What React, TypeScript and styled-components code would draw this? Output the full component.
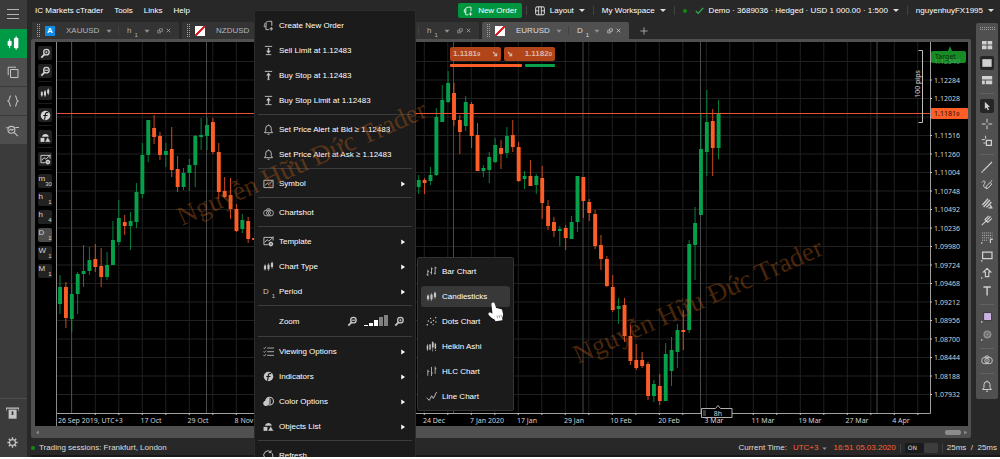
import React from 'react';
import styled, { createGlobalStyle, css } from 'styled-components';

const GlobalStyle = createGlobalStyle`
  * { box-sizing: border-box; }
  body { margin: 0; background: #fff; font-family: "Liberation Sans", Arial, sans-serif; font-size: 8px; line-height: 10px; color: #fff; }
  button { font: inherit; color: inherit; background: none; border: 0; padding: 0; margin: 0; text-align: left; }
  ul { list-style: none; margin: 0; padding: 0; }
  svg { display: block; flex: none; }
`;

/* ---------- icons, all on a 12 by 12 grid ---------- */

const S = { fill: 'none', stroke: 'currentColor' } as const;

const ICONS: Record<string, React.ReactNode> = {
  candles: (
    <g fill="currentColor">
      <rect x="1" y="5" width="2.4" height="4" /><rect x="1.9" y="3.6" width=".7" height="7" />
      <rect x="4.8" y="4" width="2.4" height="5" /><rect x="5.7" y="2.4" width=".7" height="8.4" />
      <rect x="8.6" y="2" width="2.4" height="4.6" /><rect x="9.5" y=".6" width=".7" height="8" />
    </g>
  ),
  trade: (
    <g fill="currentColor">
      <rect x="1.4" y="4" width="3.4" height="4.6" rx="1" /><rect x="2.7" y="2.4" width=".8" height="8" />
      <rect x="6.8" y="1.6" width="3.8" height="8.8" rx="1" /><rect x="8.300" y=".2" width=".8" height="11.600" />
    </g>
  ),
  copy: <g {...S}><path d="M3.5 3.5h7.5v8h-7.5z" /><path d="M9 1.2H1.2v8" /></g>,
  braces: <g {...S} strokeWidth="1.1"><path d="M4 .8C1.8.8 3.6 5.2 1 6c2.6.8.8 5.2 3 5.2M8 .8c2.2 0 .4 4.4 3 5.2-2.6.8-.8 5.2-3 5.2" /></g>,
  analyze: <g {...S}><circle cx="5" cy="5.4" r="3.2" /><path d="M7.4 7.8l3.6 3.4M0 3.4h1.6M8.6 3.2H12M3 6.2l1.4-1.4 1.2 1L7 4.4" /></g>,
  card: <g><path {...S} strokeWidth="1.2" d="M0 3.5V1h12v2.5" /><path fill="currentColor" d="M2.4 2.4h7.4v8.4H2.4z" /><path d="M5.2 4h1.6v3.4H5.2z" fill="#3a3a3a" /></g>,
  gear: (
    <g {...S}>
      <circle cx="6" cy="6" r="3.2" strokeWidth="1.3" />
      <path strokeWidth="1.6" d="M6 .4v2M6 9.6v2M.4 6h2M9.6 6h2M2 2l1.5 1.5M8.5 8.5L10 10M10 2L8.5 3.5M3.5 8.5L2 10" />
    </g>
  ),
  zoomIn: <g {...S}><circle cx="7" cy="4.6" r="3" strokeWidth="1.4" /><path strokeWidth="2" d="M4.9 6.9L1.4 10.4" /><path strokeWidth=".8" d="M5.6 4.6h2.8M7 3.2V6" /></g>,
  zoomOut: <g {...S}><circle cx="7" cy="4.6" r="3" strokeWidth="1.4" /><path strokeWidth="2" d="M4.9 6.9L1.4 10.4" /><path strokeWidth="1.2" d="M5 4.6h4" /></g>,
  indicator: <g><circle cx="6" cy="6" r="5.2" fill="currentColor" /><path fill="none" stroke="#1c1c1c" strokeWidth="1.3" d="M9 2.8C6.8 2.2 6 3 5.8 5L5 10.6M3.6 6h4.6" /></g>,
  objects: (
    <g fill="currentColor">
      <path d="M2.2 5.2a3.8 3.8 0 0 1 7.4 0z" /><path d="M.6 6.4h4.2v4.4H.6z" /><path d="M8.4 5.4l3.2 5.6H5.4z" stroke="#1c1c1c" strokeWidth=".5" />
    </g>
  ),
  template: <g {...S}><path d="M6 9.5H1v-8h10V5" /><path d="M2 7l2.4-3 2 1.6L11.6.8" /><circle cx="8.6" cy="8.8" r="1.8" strokeWidth="1.3" /><path strokeWidth=".7" d="M8.6 6v5.6M5.8 8.8h5.6" /></g>,
  symbol: <g {...S}><path d="M1 2.5h10v8H1z" /><path d="M2.6 8l2-2.4 1.8 1.6L10 3.4" /></g>,
  order: <g {...S}><path d="M6.4 10.5H3.2V7.4H1.4C1 3.4 4 1.4 7 1.4h2.6v5" /><path d="M3.4 7.4V3.2M9 7.6v4M7 9.6h4" /></g>,
  sell: <g {...S}><path d="M2 1.5h8M3 10.5h6" /><path d="M6 3.2v4.4" strokeWidth="1.5" /><path fill="currentColor" stroke="none" d="M3.4 6.4h5.2L6 9.6z" /></g>,
  buy: <g {...S}><path d="M2 1.5h8M4.8 10.5h2.4" /><path d="M6 5v5" strokeWidth="1.5" /><path fill="currentColor" stroke="none" d="M3.4 6h5.2L6 2.8z" /></g>,
  buyLimit: <g {...S}><path d="M2 1.5h8M2.6 10.5h6.8" /><path d="M6 5v4.6" strokeWidth="1.5" /><path fill="currentColor" stroke="none" d="M3.4 6h5.2L6 2.8z" /></g>,
  bell: <g {...S}><path d="M1.6 9.5h8.8L9 7.4V4.6a3 3 0 0 0-6 0v2.8z" strokeLinejoin="round" /><path d="M5 11.2h2M6 .6v1" /></g>,
  camera: <g {...S} strokeWidth=".9"><rect x=".8" y="3.6" width="10.4" height="6" rx="2.4" /><circle cx="6" cy="6.6" r="2.2" /><path d="M3.6 3.4L4.6 2h2.8l1 1.4M6 5.6v2" /></g>,
  viewing: <g {...S}><path d="M4.6 2.2H12M4.6 6.2H12M4.6 10.2H12" strokeWidth=".9" /><path strokeWidth=".8" d="M.6 2l.9 1L3.2.9M.6 6l.9 1 1.7-2.1M.6 10l.9 1 1.7-2.1" /></g>,
  color: <g><circle cx="7.2" cy="5.6" r="4.2" {...S} strokeWidth="1.2" /><path fill="currentColor" d="M7.2 1.4a4.2 4.2 0 0 0-3.4 6.600L7 9z" /><circle cx="3.2" cy="8" r="2.9" fill="currentColor" /><path d="M8 3v6" {...S} strokeWidth=".8" /></g>,
  refresh: <g {...S}><path d="M2 8.6A4.6 4.6 0 0 1 8.6 2.2M10 3.6a4.6 4.6 0 0 1-6.6 6.2" /><path d="M8.8.4v2.4H6.4M3.2 11.8V9.4h2.4" /></g>,
  bars: <g {...S} strokeWidth=".9"><path d="M2 4v7M.6 9.4H2M2 6h1.4M6 1.6v7.6M4.6 7H6M6 3h1.4M10 .8v8.4M8.6 8H10M10 2h1.6" /></g>,
  hlc: <g {...S} strokeWidth=".9"><path d="M2 4v6.6M2 6h1.6M6 1v10M6 7.6h1.4M10 .6v8M10 3h1.4" /></g>,
  dots: <g fill="currentColor"><circle cx="1.4" cy="9.6" r=".9" /><circle cx="2.6" cy="5.4" r=".8" /><circle cx="5.6" cy="7" r=".9" /><circle cx="5" cy="2.6" r=".7" /><circle cx="8.2" cy="4.8" r=".8" /><circle cx="7.8" cy="9.4" r=".8" /><circle cx="10.6" cy="1.8" r=".8" /><circle cx="10.8" cy="6.6" r=".8" /></g>,
  heikin: <g fill="currentColor"><path d="M.8 5h1.600v4.400H.8zM3.600 3.600h1.600v6H3.600zM6.400 1.400h2v5.600h-2zM9.400 2.600H11v5.800H9.400zM1.300 3.400h.6v7.400h-.6zM7.100.4h.6v11h-.6zM10 9.600h.8v1.400H10z" /></g>,
  line: <g {...S}><path d="M.6 7.4l3 2.8 2.6-5 1.8 3L11.6 1" /></g>,
  layout: <g {...S}><rect x=".8" y="1" width="10.4" height="9.6" rx="1.6" /><path d="M4.4 1v9.6M7.6 1v9.6M7.6 5.8h3.6M.8 5.8h3.6" strokeWidth=".9" /></g>,
  check: <path {...S} strokeWidth="1.6" d="M1 6.6l3.2 3.2L11 2.4" />,
  popout: <g {...S} strokeWidth="1.2"><path d="M5 1.6h5.8v5H5z" /><path d="M5 4.6H1.4v5.2h5.8V6.8" /></g>,
  close: <path {...S} strokeWidth="1.8" d="M1.8 1.8l8.4 8.4M10.2 1.8l-8.4 8.4" />,
  plus: <path {...S} strokeWidth="1.3" d="M6 .6v10.8M.6 6h10.8" />,
  down: <path fill="currentColor" d="M1 3.4h10L6 9.6z" />,
  left: <path fill="currentColor" d="M9 1v10L2.5 6z" />,
  right: <path fill="currentColor" d="M2.5 1v10L10 6z" />,
  fall: <g><path {...S} strokeWidth="2.6" d="M2 2l5 5" /><path fill="currentColor" d="M10.4 3.4v7H3z" /></g>,
  tiles: <g fill="currentColor"><path d="M1 2h4.6v3.6H1zM6.6 2h4.6v3.6H6.6zM1 6.6h4.6v3.6H1zM6.6 6.6h4.6v3.6H6.6z" /></g>,
  single: <path fill="currentColor" d="M.4 1.400h11.200v9.200H.4z" />,
  split: <g fill="currentColor"><path d="M1 2h10.2v3.6H1zM1 6.6h2.8v3.6H1zM4.8 6.6h6.4v3.6H4.8z" /></g>,
  pointer: <path fill="currentColor" d="M3.4 1v8.6l2-1.8 1.4 3.4 1.6-.8L7 7.2h2.6z" />,
  cross: <path {...S} d="M6 .8v3.8M6 7.4v3.8M.8 6h3.8M7.4 6h3.8" />,
  crossBox: <g {...S}><path d="M4.6.8v3M.8 4.6h3" /><path strokeWidth="1.2" d="M5.4 5.4h5v5h-5zM4.6 8H2.4" /></g>,
  trend: <g {...S}><path strokeWidth="1.1" d="M2 10L11 1" /><path strokeWidth="1.6" d="M.4 11h1.4" /></g>,
  pencil: <g {...S}><path d="M1 3.4c2-3 4-1 2.4 1.4S3 9 5 8.4M5 9.8l.4-2.6L9 3.4l1.8 1.6-3.6 4zM9.6 2.6l1.6-1.2" /></g>,
  hatch: <path {...S} strokeWidth="1.3" d="M1.4 8L7 1.8M2.6 10L8.8 3M5.4 10.4L10.4 5M7.4 10.8h3.4L9 7.8" />,
  fork: <path {...S} strokeWidth="1.1" d="M.8 11.2L5.6 6.6M3.6 5.4l3.2 3M3.8 5.6L7.6 1.8M5.2 7l4.4-4.6M6.8 8.4l4-4" />,
  fibo: <g {...S}><path strokeWidth=".9" strokeDasharray="1 1" d="M1.2 1h10.4M1.2 3.4h10.4M1.2 5.8h10.4M1.2 8.2h6" /><path d="M9.4 11V7.4h2.4" strokeWidth="1.2" /><path strokeWidth="1.6" d="M0 11h1.4" /></g>,
  box: <g {...S}><path strokeWidth="1.2" d="M1.6 2.2H11v6.4H1.6z" /><path strokeWidth="1.6" d="M0 11h1.4" /></g>,
  arrowUp: <g {...S}><path strokeWidth="1.1" d="M6 1.4L9.8 5H7.8v4.6H4.4V5H2.4z" /><path strokeWidth="1.6" d="M0 11h1.4" /></g>,
  text: <path {...S} strokeWidth="1.4" d="M2.4 2h7.4M6.1 2v8.6" />,
  swatch: <g><path fill="#cdb2e4" stroke="#3a3a3a" d="M2.6 1.6h8v8h-8z" /><path {...S} strokeWidth="1.6" d="M0 11h1.4" /></g>,
  ring: <g><circle cx="6.4" cy="5.4" r="4" fill="#8f8f8f" /><circle cx="6.4" cy="5.4" r="1.8" fill="none" stroke="#5a5a5a" /><path {...S} strokeWidth="1.6" d="M0 11h1.4" /></g>,
};

const Icon = ({ name, size = 12 }: { name: string; size?: number }) => (
  <svg width={size} height={size} viewBox="0 0 12 12" aria-hidden="true">{ICONS[name]}</svg>
);

/* ---------- shell ---------- */

const Shell = styled.div`
  position: relative;
  display: flex;
  height: calc(100vh - 2px);
  overflow: hidden;
  background: #282828;
`;

const Nav = styled.nav`
  flex: none;
  width: 27px;
  display: flex;
  flex-direction: column;
  background: #3b3b3b;
`;

const NavButton = styled.button<{ $tone?: 'active' | 'raised' }>`
  display: flex;
  align-items: center;
  justify-content: center;
  width: 100%;
  height: 29px;
  padding-right: 2px;
  color: ${(p) => (p.$tone === 'active' ? '#fff' : '#c4c4c4')};
  background: ${(p) => (p.$tone === 'active' ? '#009a46' : p.$tone === 'raised' ? '#4e4e4e' : 'transparent')};
  border-bottom: 1px solid ${(p) => (p.$tone === 'raised' ? '#3a3a3a' : 'transparent')};
`;

const NavFoot = styled.div`
  margin-top: auto;
  border-top: 1px solid #4e4e4e;
`;

const Burger = styled.span`
  width: 12px;
  height: 10px;
  border: solid #b5b5b5;
  border-width: 1px 0;
  display: flex;
  align-items: center;
  &::before { content: ''; flex: 1; height: 1px; background: #b5b5b5; }
`;

const Main = styled.div`
  flex: 1;
  min-width: 0;
  display: flex;
  flex-direction: column;
  padding-left: 4px;
`;

const Header = styled.header`
  flex: none;
  display: flex;
  align-items: center;
  justify-content: space-between;
  height: 22px;
  padding: 0 6px 1px 4px;
`;

const HeaderGroup = styled.div<{ $gap: number }>`
  display: flex;
  align-items: center;
  gap: ${(p) => p.$gap}px;
  white-space: nowrap;
`;

const HeaderButton = styled.button`
  display: flex;
  align-items: center;
  gap: 5px;
`;

const NewOrder = styled(HeaderButton)`
  height: 15px;
  padding: 0 5px;
  background: #00963f;
  border-radius: 2px;
`;

const Divider = styled.span`
  width: 1px;
  height: 9px;
  background: #424242;
`;

const Caret = styled.span`
  width: 6px;
  border: solid transparent;
  border-width: 3px 3px 0;
  border-top-color: #dcdcdc;
`;

const Dot = styled.span`
  width: 4px;
  height: 4px;
  border-radius: 50%;
  background: #128a12;
`;

const Check = styled.span`
  color: #2eb84a;
`;

const Work = styled.div`
  flex: 1;
  min-height: 0;
  display: flex;
  align-items: flex-start;
  padding-right: 2px;
  gap: 5px;
`;

const Charts = styled.main`
  flex: 1;
  min-width: 0;
  align-self: stretch;
  display: flex;
  flex-direction: column;
`;

/* ---------- tabs ---------- */

const TabRow = styled.div`
  flex: none;
  display: flex;
  gap: 3px;
  padding-left: 1px;
  height: 17px;
`;

const Tab = styled.div<{ $active?: boolean }>`
  flex: none;
  width: 147px;
  display: flex;
  align-items: center;
  padding: 0 7px 0 4px;
  background: ${(p) => (p.$active ? '#505050' : '#343434')};
  color: ${(p) => (p.$active ? '#dedede' : '#b4b4b4')};
  border-radius: 2px 2px 0 0;
`;

const Grip = styled.span<{ $wide?: boolean }>`
  display: block;
  flex: none;
  width: ${(p) => (p.$wide ? 16 : 4)}px;
  height: ${(p) => (p.$wide ? 4 : 14)}px;
  background: conic-gradient(#a0a0a0 25%, transparent 0) 0 0 / 2px 2px;
`;

const Badge = styled.span<{ $letter?: boolean }>`
  flex: none;
  width: 10px;
  height: 10px;
  margin: 0 11px 0 5px;
  font-weight: 700;
  text-align: center;
  color: #fff;
  background: ${(p) => (p.$letter ? '#0b8ae6' : 'linear-gradient(135deg, #fff 43%, #d8202a 43%, #d8202a 57%, #fff 57%)')};
`;

const TabName = styled.button`
  width: 40px;
`;

const Slot = styled.span<{ $left: number }>`
  display: flex;
  align-items: center;
  margin-left: ${(p) => p.$left}px;
`;

const TabMark = styled.span`
  color: #909090;
`;

const AddTab = styled.button`
  display: flex;
  align-items: center;
  padding-left: 8px;
  color: #b0b0b0;
`;

const PeriodLabel = styled.span`
  display: inline-flex;
  width: 14px;
  gap: 3px;
  sub { font-size: 6px; line-height: 6px; align-self: flex-end; vertical-align: baseline; margin-bottom: -2px; }
`;

const Period = ({ unit, n }: { unit: string; n: string }) => (
  <PeriodLabel>{unit}<sub>{n}</sub></PeriodLabel>
);

const TABS = [
  { id: 1, name: 'XAUUSD', unit: 'h', n: '1', letter: true },
  { id: 2, name: 'NZDUSD', unit: '', n: '' },
  { id: 3, name: '', unit: 'h', n: '1' },
  { id: 4, name: 'EURUSD', unit: 'D', n: '1', active: true },
];

/* ---------- chart ---------- */

const ChartFrame = styled.section`
  flex: 1;
  min-height: 0;
  display: flex;
  flex-direction: column;
  padding: 3px 3px 0 4px;
  background: #505050;
  border-radius: 2px;
`;

const ChartBody = styled.div`
  flex: 1;
  min-height: 0;
  display: flex;
  background: #000;
`;

const ChartTools = styled.div`
  flex: none;
  width: 21px;
  display: flex;
  flex-direction: column;
  align-items: center;
  gap: 4px;
  padding-top: 4px;
  padding-right: 1px;
  color: #d4d4d4;
`;

const ChartTool = styled.button<{ $on?: boolean }>`
  flex: none;
  width: 14px;
  height: 14px;
  display: flex;
  align-items: center;
  justify-content: center;
  border-radius: 2px;
  background: ${(p) => (p.$on ? '#4c4c4c' : '#222')};
  ${PeriodLabel} { width: 13px; height: 12px; gap: 0; line-height: 8px; justify-content: space-between; sub { margin-bottom: 0; } }
`;

const ToolGap = styled.hr`
  width: 14px;
  height: 1px;
  margin: -1px 0 0;
  border: 0;
  background: #1c1c1c;
`;

const Plot = styled.div`
  position: relative;
  flex: 1;
  min-width: 0;
  svg.plot { width: 100%; height: 100%; font-family: "Noto Sans", sans-serif; font-size: 7px; }
`;

const Quotes = styled.div`
  position: absolute;
  left: 394px;
  top: 5px;
  display: grid;
  grid-template-columns: 51px 51px;
  gap: 3px;
`;

const Quote = styled.button`
  display: flex;
  align-items: center;
  justify-content: space-between;
  height: 14px;
  padding: 0 3px;
  border-radius: 2px;
  background: #b2441a;
  color: #d8b8aa;
  font-weight: 700;
  small { font-size: 6px; }
`;

const Spread = styled.div`
  grid-column: 1 / 3;
  display: flex;
  gap: 3px;
`;

const SpreadBar = styled.span<{ $share: number; $color: string }>`
  flex: ${(p) => p.$share};
  height: 3px;
  border-radius: 1px;
  background: ${(p) => p.$color};
`;

const ScrollRow = styled.div`
  flex: none;
  display: flex;
  align-items: center;
  height: 12px;
  color: #8c8c8c;
  gap: 2px;
`;

const Thumb = styled.span`
  width: 16px;
  height: 5px;
  margin-left: auto;
  border-radius: 2px;
  background: #8c8c8c;
`;

type Candle = [number, 'g' | 'o', number, number, number, number];

/* slot, colour, high, body top, body bottom, low */
const CANDLES: Candle[] = [
  [0, 'g', 275, 287, 304, 314], [1, 'o', 282, 287, 318, 328], [2, 'g', 284, 294, 319, 332], [3, 'g', 272, 274, 294, 314],
  [4, 'g', 245, 271, 274, 287], [5, 'g', 247, 260, 271, 275], [6, 'o', 244, 259, 267, 272], [7, 'o', 248, 266, 277, 287],
  [8, 'g', 252, 265, 277, 280], [9, 'g', 221, 240, 265, 265], [10, 'g', 200, 218, 242, 245], [11, 'o', 215, 222, 226, 235],
  [12, 'g', 212, 221, 226, 250], [13, 'g', 183, 192, 222, 228], [14, 'g', 143, 155, 194, 198], [15, 'g', 120, 120, 155, 162],
  [16, 'o', 115, 128, 137, 144], [17, 'o', 132, 136, 155, 160], [18, 'g', 143, 151, 155, 167], [19, 'o', 127, 149, 170, 177],
  [20, 'o', 156, 169, 187, 192], [21, 'g', 168, 173, 187, 190], [22, 'g', 159, 165, 173, 191], [23, 'g', 135, 136, 165, 187],
  [24, 'g', 118, 135, 137, 150], [25, 'g', 118, 125, 136, 150], [26, 'o', 118, 122, 152, 154], [27, 'o', 143, 152, 192, 199],
  [28, 'o', 177, 191, 197, 198], [29, 'o', 178, 195, 209, 219], [30, 'o', 204, 209, 231, 232], [31, 'g', 214, 220, 229, 233],
  [32, 'o', 217, 221, 239, 243], [33, 'o', 238, 238, 240, 240],
  [61, 'g', 175, 180, 187, 194], [62, 'o', 178, 180, 183, 194], [63, 'g', 167, 175, 181, 185], [64, 'g', 108, 117, 175, 176],
  [65, 'g', 85, 100, 122, 122], [66, 'g', 71, 83, 102, 103], [67, 'o', 83, 93, 120, 126], [68, 'o', 115, 120, 132, 154],
  [69, 'g', 96, 102, 126, 131], [70, 'o', 102, 104, 136, 148], [71, 'o', 123, 135, 171, 171], [72, 'g', 165, 168, 171, 177],
  [73, 'g', 152, 157, 170, 183], [74, 'g', 138, 145, 162, 163], [75, 'o', 140, 148, 154, 169], [76, 'g', 127, 136, 153, 158],
  [77, 'o', 120, 135, 147, 152], [78, 'o', 142, 147, 181, 182], [79, 'g', 171, 176, 179, 189], [80, 'o', 160, 176, 186, 186],
  [81, 'g', 174, 176, 185, 194], [82, 'o', 166, 178, 203, 219], [83, 'o', 200, 206, 226, 230], [84, 'o', 217, 222, 231, 237],
  [85, 'g', 226, 229, 231, 246], [86, 'o', 225, 228, 238, 250], [87, 'g', 216, 222, 239, 239], [88, 'g', 176, 176, 222, 232],
  [89, 'o', 177, 177, 201, 218], [90, 'o', 199, 202, 213, 221], [91, 'o', 210, 214, 246, 249], [92, 'o', 235, 245, 259, 270],
  [93, 'o', 256, 259, 286, 287], [94, 'o', 275, 287, 310, 312], [95, 'g', 298, 306, 309, 324], [96, 'o', 298, 305, 336, 342],
  [97, 'o', 325, 336, 361, 365], [98, 'o', 344, 360, 368, 370], [99, 'o', 352, 360, 366, 368], [100, 'o', 362, 364, 396, 400],
  [101, 'g', 380, 384, 396, 402], [102, 'o', 374, 386, 401, 405], [103, 'g', 343, 354, 401, 401], [104, 'g', 337, 350, 371, 386],
  [105, 'g', 324, 330, 352, 368], [106, 'o', 310, 330, 332, 350], [107, 'g', 240, 244, 330, 333], [108, 'g', 207, 223, 245, 280],
  [109, 'g', 113, 149, 215, 215], [110, 'g', 90, 122, 152, 176], [111, 'o', 109, 121, 148, 176], [112, 'g', 100, 113, 148, 159],
];

const DATES: [string, number][] = [
  ['17 Oct', 151], ['29 Oct', 198], ['8 Nov', 244], ['24 Dec', 434], ['7 Jan 2020', 487], ['17 Jan', 527], ['29 Jan', 574],
  ['10 Feb', 621], ['20 Feb', 669], ['3 Mar', 714], ['11 Mar', 763], ['19 Mar', 810], ['27 Mar', 857], ['4 Apr', 901],
];

const range = (n: number) => Array.from({ length: n }, (_, i) => i);
const COLORS = { g: '#06a04b', o: '#fd5d27' };

const PriceChart = () => (
  <svg className="plot" viewBox="56 42 912 384" role="img" aria-label="EURUSD daily chart">
    <g stroke="#202020">
      {range(37).map((k) => <path key={k} d={`M${71.8 + 23.5 * k} 42V413`} />)}
      {range(19).map((k) => <path key={k} d={`M57 ${61.5 + 18.5 * k}H930`} />)}
    </g>
    <g stroke="#4a4a4a">
      {[71.5, 206.5, 453.5, 583, 700.5, 877].map((x) => <path key={x} d={`M${x} 42V413`} />)}
    </g>
    {CANDLES.map(([slot, c, high, top, bottom, low]) => {
      const x = 60 + 5.88 * slot;
      return (
        <g key={slot} fill={COLORS[c]}>
          <rect x={x - 0.5} y={high} width="1" height={low - high} opacity=".8" />
          <rect x={x - 1.9} y={top} width="3.9" height={bottom - top} />
        </g>
      );
    })}
    <rect x="57" y="113" width="874" height="1" fill="#ea4f38" />
    <path d="M56.5 42V426" stroke="#8a8a8a" />
    <path d="M57 413.5H930.5V42" fill="none" stroke="#a0a0a0" />
    <g stroke="#c0c0c0">
      {range(36).map((k) => <path key={k} d={`M${95.3 + 23.5 * k} 413v2`} />)}
      {range(19).map((k) => <path key={k} d={`M930 ${61.5 + 18.5 * k}h2`} />)}
    </g>
    <g fill="#d0d0d0">
      <text x="58" y="423">26 Sep 2019, UTC+3</text>
      {DATES.map(([d, x]) => <text key={d} x={x} y="423" textAnchor="middle">{d}</text>)}
      {range(19).filter((k) => k > 0 && k !== 3).map((k) => (
        <text key={k} x="934" y={64 + 18.5 * k}>{(1.1254 - 0.00256 * k).toFixed(5)}</text>
      ))}
    </g>
    <g>
      <path d="M948 51l2-5 2 5z" fill="#178c24" />
      <rect x="931" y="51" width="35" height="12" rx="2" fill="#178c24" />
      <text x="934" y="64" fill="#4da555">1.12540</text>
      <text x="935" y="59" fill="#062e0a">Target</text>
    </g>
    <rect x="931" y="108" width="37" height="11" rx="1" fill="#fd5d27" />
    <text x="934" y="116" fill="#2a0e04">1.1181<tspan fontSize="6">9</tspan></text>
    <path d="M918.5 50.5h4v72h-4" fill="none" stroke="#bdbdbd" />
    <text transform="translate(920 84) rotate(-90)" textAnchor="middle" fill="#d0d0d0">100 pips</text>
    <path d="M703 408.5h12.5l2.5-3 2.5 3h11.5v9H701.5v-9z" fill="#000" stroke="#b0b0b0" strokeLinejoin="round" />
    <rect x="703" y="410" width="3" height="6" fill="#3c3c3c" />
    <text x="718" y="416" textAnchor="middle" fill="#d0d0d0">8h</text>
  </svg>
);

/* ---------- drawing toolbar ---------- */

const DrawBar = styled.aside`
  flex: none;
  width: 22px;
  min-height: 376px;
  margin-top: 1px;
  padding: 3px 0 4px;
  display: flex;
  flex-direction: column;
  align-items: center;
  background: #505050;
  border-radius: 2px;
  color: #d0d0d0;
`;

const GripArea = styled.div`
  height: 10px;
  padding-top: 1px;
`;

const DrawButton = styled.button<{ $on?: boolean }>`
  flex: 1;
  display: flex;
  align-items: center;
  justify-content: center;
  svg {
    width: 14px;
    height: 14px;
    padding: ${(p) => (p.$on ? 2 : 1)}px;
    border-radius: 2px;
    ${(p) => p.$on && css`background: #262626;`}
  }
`;

const DrawGap = styled.hr`
  flex: none;
  width: 14px;
  height: 1px;
  margin: 4px 0 3px;
  border: 0;
  background: #616161;
`;

const DRAW_GROUPS = [
  ['tiles', 'single*', 'split'],
  ['pointer*', 'cross', 'crossBox'],
  ['trend', 'pencil', 'hatch', 'fork', 'fibo', 'box', 'arrowUp', 'text'],
  ['swatch', 'ring'],
  ['camera'],
  ['bell'],
];

/* ---------- status bar ---------- */

const Status = styled.footer`
  flex: none;
  display: flex;
  align-items: center;
  justify-content: space-between;
  height: 19px;
  padding: 4px 3px 1px 0;
  border-bottom: 2px solid #1a1a1a;
  color: #dedede;
  white-space: nowrap;
`;

const StatusGroup = styled.div`
  display: flex;
  align-items: center;
  gap: 4px;
`;

const Accent = styled.span`
  display: flex;
  align-items: center;
  gap: 4px;
  margin-left: 2px;
  color: #ff6230;
`;

const Switch = styled.label`
  display: flex;
  align-items: center;
  gap: 4px;
  width: 33px;
  height: 10px;
  padding-left: 3px;
  background: #1b1b1b;
  font-family: "DejaVu Sans", sans-serif;
  font-size: 6px;
  input { appearance: none; width: 14px; height: 10px; margin: 0 0 0 auto; background: #3d3d3d; border-radius: 1px; }
`;

/* ---------- context menu ---------- */

const Menu = styled.ul`
  position: absolute;
  left: 254px;
  top: 10px;
  width: 162px;
  padding: 2px 3px;
  background: #1b1b1b;
  border: 1px solid #2c2c2c;
  border-radius: 2px;
`;

const Submenu = styled.ul`
  position: absolute;
  left: 159px;
  top: 3px;
  width: 97px;
  padding: 1px 3px;
  background: #1b1b1b;
  border: 1px solid #333;
  border-radius: 2px;
`;

const MenuItem = styled.li`
  position: relative;
`;

const MenuButton = styled.button<{ $on?: boolean }>`
  display: flex;
  align-items: center;
  width: 100%;
  height: 25px;
  padding: 0 6px 0 5px;
  gap: 4px;
  border: solid transparent;
  border-width: 2px 0;
  border-radius: 4px;
  background: ${(p) => (p.$on ? '#383838' : 'transparent')};
  background-clip: padding-box;
  color: inherit;
`;

const MenuIcon = styled.span`
  flex: none;
  width: 12px;
  display: flex;
  color: #c6c6c6;
`;

const MenuText = styled.span`
  flex: 1;
  white-space: nowrap;
`;

const MenuRule = styled.li`
  height: 1px;
  margin: 1px 0 2px;
  background: #3c3c3c;
`;

const ZoomRow = styled.li`
  display: flex;
  align-items: center;
  height: 27px;
  padding: 0 7px 0 21px;
`;

const ZoomTool = styled.button`
  color: #c6c6c6;
`;

const ZoomBars = styled.span`
  display: flex;
  align-items: flex-end;
  gap: 1px;
  margin: 0 6px 2px;
`;

const ZoomBar = styled.span<{ $h: number; $lit: boolean }>`
  width: 4px;
  height: ${(p) => p.$h}px;
  background: ${(p) => (p.$lit ? '#fff' : '#808080')};
`;

const Entry = ({ icon, label, arrow, on, children }: { icon: React.ReactNode; label: string; arrow?: boolean; on?: boolean; children?: React.ReactNode }) => (
  <MenuItem>
    <MenuButton $on={on}>
      <MenuIcon>{typeof icon === 'string' ? <Icon name={icon} size={11} /> : icon}</MenuIcon>
      <MenuText>{label}</MenuText>
      {arrow && <Icon name="right" size={6} />}
    </MenuButton>
    {children}
  </MenuItem>
);

/* ---------- overlays ---------- */

const Watermark = styled.svg`
  position: absolute;
  inset: 0;
  width: 100%;
  height: 100%;
  pointer-events: none;
  font-family: "Liberation Serif", "Times New Roman", serif;
  font-size: 27px;
`;

const Hand = styled.svg`
  position: absolute;
  left: 488px;
  top: 302px;
`;

export default function App() {
  return (
    <>
      <GlobalStyle />
      <Shell>
        <Nav>
          <NavButton aria-label="Menu"><Burger /></NavButton>
          <NavButton $tone="active" aria-label="Trade"><Icon name="trade" size={14} /></NavButton>
          <NavButton $tone="raised" aria-label="Copy"><Icon name="copy" /></NavButton>
          <NavButton $tone="raised" aria-label="Automate"><Icon name="braces" /></NavButton>
          <NavButton $tone="raised" aria-label="Analyze"><Icon name="analyze" size={13} /></NavButton>
          <NavFoot>
            <NavButton aria-label="Deposit"><Icon name="card" size={13} /></NavButton>
            <NavButton aria-label="Settings"><Icon name="gear" size={11} /></NavButton>
          </NavFoot>
        </Nav>
        <Main>
          <Header>
            <HeaderGroup $gap={11}>
              <button>IC Markets cTrader</button>
              <button>Tools</button>
              <button>Links</button>
              <button>Help</button>
            </HeaderGroup>
            <HeaderGroup $gap={8}>
              <HeaderGroup $gap={4}>
                <NewOrder><Icon name="order" size={10} />New Order</NewOrder>
                <Divider />
              </HeaderGroup>
              <HeaderButton><Icon name="layout" size={10} />Layout<Caret /></HeaderButton>
              <Divider />
              <HeaderButton>My Workspace<Caret /></HeaderButton>
              <Divider />
              <Dot />
              <HeaderButton><Check><Icon name="check" size={9} /></Check>Demo · 3689036 · Hedged · USD 1 000.00 · 1:500<Caret /></HeaderButton>
              <Divider />
              <HeaderButton>nguyenhuyFX1995<Caret /></HeaderButton>
            </HeaderGroup>
          </Header>
          <Work>
            <Charts>
              <TabRow>
                {TABS.map((t) => (
                  <Tab key={t.id} $active={t.active}>
                    <Grip />
                    <Badge $letter={t.letter}>{t.letter ? 'A' : ''}</Badge>
                    <TabName>{t.name}</TabName>
                    <TabMark><Icon name="down" size={6} /></TabMark>
                    <Slot $left={6}><Divider /></Slot>
                    <Slot $left={8}><Period unit={t.unit} n={t.n} /></Slot>
                    <Slot $left={3}><TabMark><Icon name="down" size={6} /></TabMark></Slot>
                    <Slot $left={7}><Icon name="popout" size={6} /></Slot>
                    <Slot $left={3}><Icon name="close" size={5} /></Slot>
                  </Tab>
                ))}
                <AddTab aria-label="Add chart"><Icon name="plus" size={8} /></AddTab>
              </TabRow>
              <ChartFrame>
                <ChartBody>
                  <ChartTools>
                    <ChartTool aria-label="Zoom in"><Icon name="zoomIn" size={11} /></ChartTool>
                    <ChartTool aria-label="Zoom out"><Icon name="zoomOut" size={11} /></ChartTool>
                    <ToolGap />
                    <ChartTool aria-label="Chart type"><Icon name="candles" size={10} /></ChartTool>
                    <ToolGap />
                    <ChartTool aria-label="Indicators"><Icon name="indicator" size={11} /></ChartTool>
                    <ToolGap />
                    <ChartTool aria-label="Objects"><Icon name="objects" size={11} /></ChartTool>
                    <ToolGap />
                    <ChartTool aria-label="Template"><Icon name="template" size={11} /></ChartTool>
                    <ToolGap />
                    {[['m', '30'], ['h', '1'], ['h', '4'], ['D', '1'], ['W', '1'], ['M', '1']].map(([u, n]) => (
                      <ChartTool key={u + n} $on={u === 'D'}><Period unit={u} n={n} /></ChartTool>
                    ))}
                  </ChartTools>
                  <Plot>
                    <PriceChart />
                    <Quotes>
                      <Quote><span>1.1181<small>9</small></span><Icon name="fall" size={6} /></Quote>
                      <Quote><Icon name="fall" size={6} /><span>1.1182<small>0</small></span></Quote>
                      <Spread>
                        <SpreadBar $share={72} $color={COLORS.o} />
                        <SpreadBar $share={30} $color={COLORS.g} />
                      </Spread>
                    </Quotes>
                  </Plot>
                </ChartBody>
                <ScrollRow><Icon name="left" size={5} /><Thumb /><Icon name="right" size={5} /></ScrollRow>
              </ChartFrame>
            </Charts>
            <DrawBar>
              <GripArea><Grip $wide /></GripArea>
              {DRAW_GROUPS.map((group, i) => (
                <React.Fragment key={i}>
                  {i > 0 && <DrawGap />}
                  {group.map((name) => (
                    <DrawButton key={name} $on={name.endsWith('*')} aria-label={name.replace('*', '')}>
                      <Icon name={name.replace('*', '')} />
                    </DrawButton>
                  ))}
                </React.Fragment>
              ))}
            </DrawBar>
          </Work>
          <Status>
            <StatusGroup><Dot />Trading sessions: Frankfurt, London</StatusGroup>
            <StatusGroup>
              Current Time:
              <Accent as="button">UTC+3<TabMark><Icon name="down" size={5} /></TabMark></Accent>
              <Accent>16:51 05.03.2020</Accent>
              <Divider />
              <Switch>ON<input type="checkbox" /></Switch>
              <Divider />
              <span>25ms&nbsp; /&nbsp; 25ms</span>
            </StatusGroup>
          </Status>
        </Main>
        <Menu>
          <Entry icon="order" label="Create New Order" />
          <Entry icon="sell" label="Sell Limit at 1.12483" />
          <Entry icon="buy" label="Buy Stop at 1.12483" />
          <Entry icon="buyLimit" label="Buy Stop Limit at 1.12483" />
          <MenuRule />
          <Entry icon="bell" label="Set Price Alert at Bid ≥ 1.12483" />
          <Entry icon="bell" label="Set Price Alert at Ask ≥ 1.12483" />
          <MenuRule />
          <Entry icon="symbol" label="Symbol" arrow />
          <MenuRule />
          <Entry icon="camera" label="Chartshot" />
          <MenuRule />
          <Entry icon="template" label="Template" arrow />
          <Entry icon="candles" label="Chart Type" arrow>
            <Submenu>
              <Entry icon="bars" label="Bar Chart" />
              <Entry icon="candles" label="Candlesticks" on />
              <Entry icon="dots" label="Dots Chart" />
              <Entry icon="heikin" label="Heikin Ashi" />
              <Entry icon="hlc" label="HLC Chart" />
              <Entry icon="line" label="Line Chart" />
            </Submenu>
          </Entry>
          <Entry icon={<Period unit="D" n="1" />} label="Period" arrow />
          <MenuRule />
          <ZoomRow>
            <MenuText>Zoom</MenuText>
            <ZoomTool aria-label="Zoom out"><Icon name="zoomOut" size={11} /></ZoomTool>
            <ZoomBars>
              {[1, 3, 6, 9, 11].map((h, i) => <ZoomBar key={h} $h={h} $lit={i < 3} />)}
            </ZoomBars>
            <ZoomTool aria-label="Zoom in"><Icon name="zoomIn" size={11} /></ZoomTool>
          </ZoomRow>
          <MenuRule />
          <Entry icon="viewing" label="Viewing Options" arrow />
          <Entry icon="indicator" label="Indicators" arrow />
          <Entry icon="color" label="Color Options" arrow />
          <Entry icon="objects" label="Objects List" arrow />
          <MenuRule />
          <Entry icon="refresh" label="Refresh" />
        </Menu>
        <Watermark>
          <g fill="#b35c1a" fillOpacity=".42">
            <text transform="translate(182 226) rotate(-24)">Nguyễn Hữu Đức Trader</text>
            <text transform="translate(578 364) rotate(-24)">Nguyễn Hữu Đức Trader</text>
          </g>
        </Watermark>
        <Hand width="16" height="20" viewBox="0 0 16 20" aria-hidden="true">
          <path d="M4.4.8c.9-.5 2 0 2.300.9l1.500 4.500c.7-.5 1.500-.3 1.900.4.700-.4 1.600-.1 2 .6.800-.3 1.700.1 2 .9l.9 3.600c.2 1.500-.2 2.700-.8 3.900l.2 2.600-6.900 1.100-.9-1.700c-2-.8-3.500-2.300-5.400-4.100-1-1.100-1.100-2.300-.2-2.800.9-.4 1.900 0 3.500 1.100L3.500 2.700c-.2-.8.1-1.500.9-1.900z" fill="#fff" />
          <path d="M9 13.500l.6 2.800M11 13l.6 2.800M13 12.600l.4 2.600" stroke="#444" strokeWidth=".5" />
        </Hand>
      </Shell>
    </>
  );
}
